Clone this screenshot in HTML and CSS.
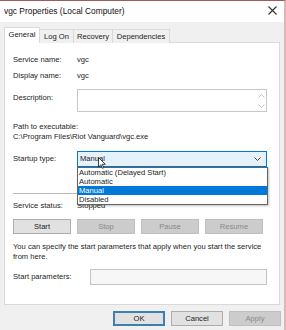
FILE: index.html
```html
<!DOCTYPE html>
<html lang="en">
<head>
<meta charset="UTF-8">
<title>vgc Properties (Local Computer)</title>
<link rel="stylesheet" href="styles.css">
</head>
<body>
<div class="win">
	<div class="titlebar">
		<span class="title">vgc Properties (Local Computer)</span>
		<svg class="close" width="9" height="9" viewBox="0 0 9 9"><path d="M0.5 0.5L8.5 8.5M8.5 0.5L0.5 8.5" stroke="#333" stroke-width="1.1" fill="none"/></svg>
	</div>
	<div class="body">
		<div class="tabs">
			<span class="tab on t1">General</span>
			<span class="tab t2">Log On</span>
			<span class="tab t3">Recovery</span>
			<span class="tab t4">Dependencies</span>
		</div>
		<div class="panel">
			<div class="row r1"><span class="lbl">Service name:</span><span>vgc</span></div>
			<div class="row r2"><span class="lbl">Display name:</span><span>vgc</span></div>
			<div class="row desc">
				<span class="lbl">Description:</span>
				<div class="area">
					<div class="scroll">
						<svg width="7" height="4" viewBox="0 0 7 4"><path d="M0.5 3.5L3.5 0.5L6.5 3.5" stroke="#c4c4c4" fill="none"/></svg>
						<svg width="7" height="4" viewBox="0 0 7 4"><path d="M0.5 0.5L3.5 3.5L6.5 0.5" stroke="#c4c4c4" fill="none"/></svg>
					</div>
				</div>
			</div>
			<div class="path-lbl">Path to executable:</div>
			<div class="path">C:\Program Files\Riot Vanguard\vgc.exe</div>
			<div class="row startup">
				<span class="lbl">Startup type:</span>
				<div class="combo">
					<span>Manual</span>
					<svg class="chev" width="7" height="4" viewBox="0 0 7 4"><path d="M0.5 0.5L3.5 3.5L6.5 0.5" stroke="#444" fill="none"/></svg>
					<ul class="list">
						<li>Automatic (Delayed Start)</li>
						<li>Automatic</li>
						<li class="sel">Manual</li>
						<li>Disabled</li>
					</ul>
					<svg class="cursor" width="8" height="12" viewBox="0 0 8 12"><path d="M0.5 0.5L0.5 10L2.8 7.8L4.4 11.3L5.8 10.7L4.2 7.3L7.3 7.3Z" fill="#fff" stroke="#111" stroke-width="0.8"/></svg>
				</div>
			</div>
			<div class="sep"></div>
			<div class="row status"><span class="lbl">Service status:</span><span>Stopped</span></div>
			<div class="btns">
				<span class="btn">Start</span>
				<span class="btn off">Stop</span>
				<span class="btn off">Pause</span>
				<span class="btn off">Resume</span>
			</div>
			<p class="note">You can specify the start parameters that apply when you start the service<br>from here.</p>
			<div class="row params">
				<span class="lbl wide">Start parameters:</span>
				<div class="input"></div>
			</div>
		</div>
		<div class="actions">
			<span class="btn ok">OK</span>
			<span class="btn">Cancel</span>
			<span class="btn off">Apply</span>
		</div>
	</div>
</div>
</body>
</html>
```

FILE: styles.css
```css
*{margin:0;padding:0;box-sizing:border-box;}
body{background:#f0f0f0;font-family:"Liberation Sans",Arial,sans-serif;font-size:7.6px;color:#1c1c1c;}
ul,li{list-style:none;}
.win{width:286px;height:330px;background:#f0f0f0;border-top:1px solid #a05a5a;border-right:2px solid #e2b4b4;overflow:hidden;}
.titlebar{height:21px;background:#fff;display:flex;align-items:center;justify-content:space-between;padding:0 6px 2px 4px;}
.title{font-size:8.4px;color:#111;}
.close{margin-right:1px;}
.body{padding-top:5px;}
.tabs{display:flex;align-items:flex-end;padding-left:4px;height:16px;position:relative;z-index:2;}
.tab{height:14px;line-height:13px;text-align:center;border:1px solid #d9d9d9;border-bottom:0;background:#f0f0f0;margin-left:-1px;}
.tab.on{height:16px;line-height:14px;background:#fff;margin-left:0;}
.t1{width:36px;}
.t2{width:35px;}
.t3{width:40px;}
.t4{width:58px;}
.panel{margin:-1px 0 0 4px;width:276px;height:263px;background:#fff;border:1px solid #d9d9d9;padding:11px 0 0 8px;}
.row{display:flex;align-items:center;line-height:12px;}
.lbl{width:64px;flex:none;}
.lbl.wide{width:77px;}
.r2{margin-top:4px;}
.desc{margin-top:7px;align-items:flex-start;}
.desc .lbl{margin-top:3px;}
.area{width:190px;height:23px;border:1px solid #c8c8c8;display:flex;justify-content:flex-end;}
.scroll{width:10px;display:flex;flex-direction:column;justify-content:space-between;align-items:center;padding:4px 0 3px;}
.path-lbl{margin-top:10px;line-height:10px;}
.path{line-height:10px;}
.startup{margin-top:9px;}
.combo{position:relative;width:190px;height:16px;background:#e5f1fb;border:1px solid #0078d7;display:flex;align-items:center;justify-content:space-between;padding:0 5px 0 2px;}
.list{position:absolute;left:-1px;top:15px;width:191px;background:#fff;border:1px solid #646464;padding-top:0;box-shadow:1px 1px 2px rgba(0,0,0,.25);z-index:3;}
.list li{height:9px;line-height:9px;padding-left:1px;}
.list li.sel{background:#0078d7;color:#fff;}
.cursor{position:absolute;left:20px;top:5px;z-index:4;}
.sep{margin-top:26px;width:254px;height:1px;background:#b9b9b9;}
.status{margin-top:6px;}
.btns{margin-top:7px;display:flex;gap:6px;width:254px;}
.btn{width:58px;height:15px;line-height:13px;text-align:center;background:#e1e1e1;border:1px solid #adadad;color:#1c1c1c;}
.btn.off{background:#cccccc;border-color:#bfbfbf;color:#8a8a8a;}
.note{margin-top:8px;line-height:10px;}
.params{margin-top:7px;}
.input{width:177px;height:16px;border:1px solid #c4c4c4;background:#f7f7f7;}
.actions{display:flex;justify-content:flex-end;gap:6px;margin-top:6px;padding-right:3px;}
.actions .btn{width:52px;}
.btn.ok{border:2px solid #3c7fb1;line-height:11px;}
```
